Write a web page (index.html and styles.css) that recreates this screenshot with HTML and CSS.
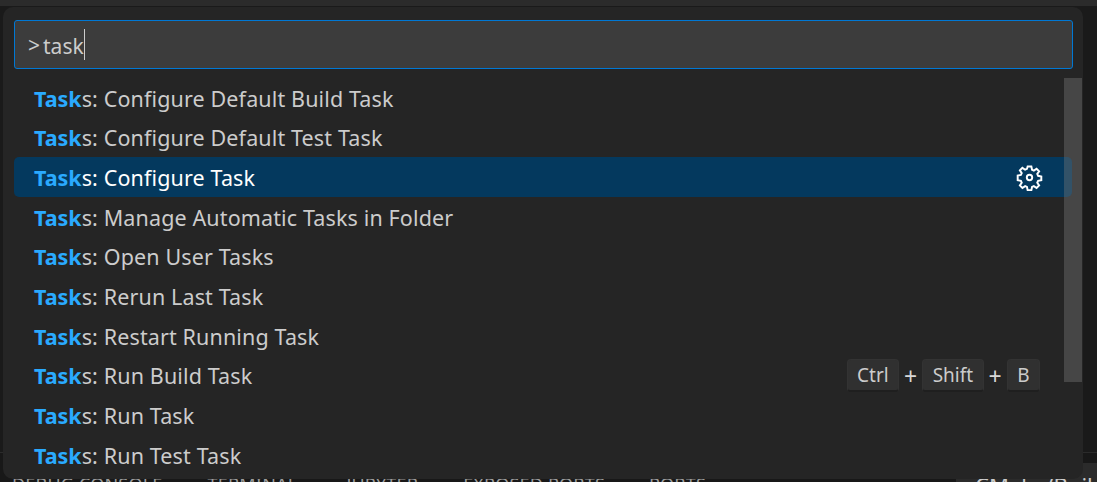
FILE: index.html
```html
<!DOCTYPE html>
<html lang="en">
<head>
    <meta charset="UTF-8">
    <meta name="viewport" content="width=device-width, initial-scale=1.0">
    <title>Command Palette</title>
    <link rel="stylesheet" href="styles.css">
</head>
<body>
    <div class="titlebar"></div>
    <div class="editor"></div>
    <div class="panel">
        <div class="tabs">
            <span class="tab tab-debug">DEBUG CONSOLE</span>
            <span class="tab tab-terminal">TERMINAL</span>
            <span class="tab tab-jupyter">JUPYTER</span>
            <span class="tab tab-exposed">EXPOSED PORTS</span>
            <span class="tab">PORTS</span>
        </div>
        <div class="cmake">CMake/Build</div>
    </div>

    <div class="palette">
        <div class="input-box">
            <span class="prompt">&gt;</span><span class="input-text">task</span><span class="caret"></span>
        </div>
        <div class="list">
            <div class="scrollbar"></div>
            <div class="row"><span><b>Task</b>s: Configure Default Build Task</span></div>
            <div class="row"><span><b>Task</b>s: Configure Default Test Task</span></div>
            <div class="row active">
                <span><b>Task</b>s: Configure Task</span>
                <svg class="gear" viewBox="0 0 16 16" width="27" height="27" fill="none" stroke="#fff" stroke-width="1.15">
                    <path d="M6.9 1.5h2.2l.4 1.9 1.1.5 1.6-1.1 1.5 1.5-1.1 1.6.5 1.1 1.9.4v2.2l-1.9.4-.5 1.1 1.1 1.6-1.5 1.5-1.6-1.1-1.1.5-.4 1.9H6.9l-.4-1.9-1.1-.5-1.6 1.1-1.5-1.5 1.1-1.6-.5-1.1-1.9-.4V6.9l1.9-.4.5-1.1-1.1-1.6 1.5-1.5 1.6 1.1 1.1-.5z"/>
                    <circle cx="8" cy="8" r="1.6"/>
                </svg>
            </div>
            <div class="row"><span><b>Task</b>s: Manage Automatic Tasks in Folder</span></div>
            <div class="row"><span><b>Task</b>s: Open User Tasks</span></div>
            <div class="row"><span><b>Task</b>s: Rerun Last Task</span></div>
            <div class="row"><span><b>Task</b>s: Restart Running Task</span></div>
            <div class="row">
                <span><b>Task</b>s: Run Build Task</span>
                <span class="keys">
                    <kbd>Ctrl</kbd><i>+</i><kbd>Shift</kbd><i>+</i><kbd>B</kbd>
                </span>
            </div>
            <div class="row"><span><b>Task</b>s: Run Task</span></div>
            <div class="row"><span><b>Task</b>s: Run Test Task</span></div>
        </div>
    </div>
</body>
</html>
```

FILE: styles.css
```css
html, body {
    height: 100%;
}
body {
    margin: 0;
    font-family: "Noto Sans", "Open Sans", sans-serif;
    background-color: #181818;
    color: #cccccc;
    display: flex;
    flex-direction: column;
    overflow: hidden;
}
.titlebar {
    height: 6px;
    background-color: #2b2b2b;
}
.editor {
    flex-grow: 1;
    background-color: #1a1a1a;
}
.panel {
    height: 30px;
    background-color: #181818;
    border-top: 1px solid #2b2b2b;
    display: flex;
    justify-content: space-between;
    box-sizing: border-box;
    overflow: hidden;
}
.tabs {
    display: flex;
    padding: 19px 0 0 12px;
    color: #9d9d9d;
    font-size: 18px;
    letter-spacing: 0.2px;
    line-height: 24px;
    white-space: nowrap;
}
.tab-debug {
    margin-right: 45px;
}
.tab-terminal {
    margin-right: 49px;
}
.tab-jupyter {
    margin-right: 45px;
}
.tab-exposed {
    margin-right: 44px;
}
.cmake {
    width: 122px;
    margin-top: 10px;
    padding: 9px 0 0 19px;
    background-color: #2b2b2b;
    color: #cccccc;
    font-size: 22px;
    line-height: 26px;
    white-space: nowrap;
}
/* floats over the workbench */
.palette {
    position: absolute;
    left: 3px;
    top: 7px;
    width: 1080px;
    height: 472px;
    box-sizing: border-box;
    background-color: #252525;
    border-radius: 10px;
    padding: 13px 0 0 11px;
}
.input-box {
    width: 1059px;
    height: 49px;
    box-sizing: border-box;
    background-color: #3c3c3c;
    border: 1px solid #0078d4;
    border-radius: 3px;
    padding-left: 13px;
    display: flex;
    align-items: center;
    font-size: 21px;
}
.prompt {
    margin-right: 3px;
}
.input-text {
    padding-top: 2px;
}
.caret {
    width: 1px;
    height: 31px;
    background-color: #cccccc;
}
.list {
    position: relative;
    margin-top: 9px;
    width: 1058px;
}
.scrollbar {
    position: absolute;
    z-index: 1;
    left: 1050px;
    top: 0;
    width: 18px;
    height: 304px;
    background-color: rgba(121, 121, 121, 0.4);
}
.row {
    height: 39.7px;
    box-sizing: border-box;
    padding: 0.5px 30px 0 20px;
    display: flex;
    align-items: center;
    justify-content: space-between;
    font-size: 21.5px;
    letter-spacing: 0.13px;
    white-space: nowrap;
    border-radius: 5px;
}
.row b {
    color: #2aaaff;
    font-weight: 700;
    letter-spacing: 0;
}
.active {
    background-color: #04395e;
    color: #ffffff;
}
.gear {
    margin-right: -1px;
}
.keys {
    display: flex;
    align-items: center;
    margin-right: 2px;
    letter-spacing: 0;
}
.keys i {
    font-style: normal;
    font-size: 23px;
    width: 23px;
    text-align: center;
    color: #d8d8d8;
}
kbd {
    font-family: inherit;
    font-size: 19px;
    background-color: #303030;
    border: 1px solid #333333;
    border-bottom: 2px solid #1f1f1f;
    border-radius: 4px;
    height: 33px;
    box-sizing: border-box;
    padding: 0 9.5px;
    display: flex;
    align-items: center;
}
```
